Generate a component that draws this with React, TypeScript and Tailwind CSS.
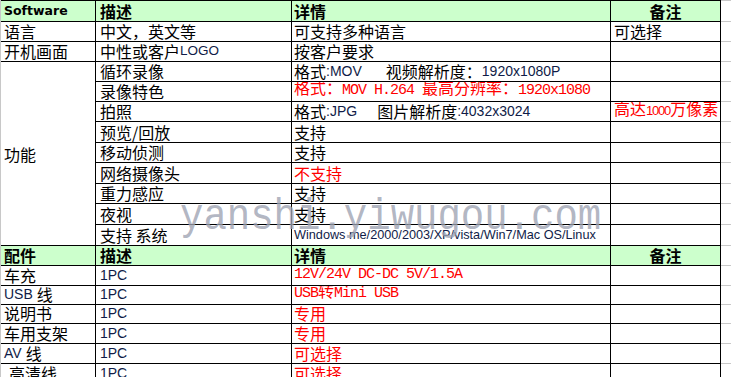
import type { ReactNode } from 'react'

// spreadsheet-style spec sheet
const cjk = "font-['Noto_Sans_CJK_SC',sans-serif]"

function L({ children, size = 'text-[14px]' }: { children: ReactNode; size?: string }) {
  return <span className={`font-['Liberation_Sans',sans-serif] ${size} text-[#101c48]`}>{children}</span>
}

function M({ children }: { children: ReactNode }) {
  return <span className="font-['Liberation_Mono',monospace] text-[15px] tracking-[-1px]">{children}</span>
}

function Cell({
  children,
  className = '',
  head = false,
  middle = false,
}: {
  children?: ReactNode
  className?: string
  head?: boolean
  middle?: boolean
}) {
  return (
    <div
      className={`flex overflow-hidden whitespace-nowrap border-r border-b border-black text-[16px] leading-[18px] text-black ${
        middle ? 'items-center' : 'items-end pb-px'
      } ${head ? 'bg-[#ccffcc] font-bold' : 'bg-white'} ${className}`}
    >
      {children}
    </div>
  )
}

function Gap({ top = false }: { top?: boolean }) {
  return <div className={`border-b border-[#c8c8c8] bg-white ${top ? 'border-t border-t-[#c8c8c8]' : ''}`} />
}

function Row({ a, b, c, d }: { a?: ReactNode; b: ReactNode; c: ReactNode; d?: ReactNode }) {
  return (
    <>
      {a !== undefined && <Cell className="pl-[3px]">{a}</Cell>}
      <Cell className="pl-[4px]">{b}</Cell>
      <Cell className="pl-[2px]">{c}</Cell>
      <Cell className="pl-[3px]">{d}</Cell>
      <Gap />
    </>
  )
}

const red = (t: ReactNode) => <span className="text-[#ff0000]">{t}</span>

export default function App() {
  return (
    <div className={`relative h-[377px] w-[731px] overflow-hidden bg-white ${cjk}`}>
      <div className="grid grid-cols-[95px_196px_319px_110px_1fr] grid-rows-[22px_20px_20px_20px_20px_20px_21px_20px_21px_20px_21px_21px_20px_20px_19px_19px_20px_20px_20px] border-l border-[#c8c8c8]">
        {/* software header */}
        <Cell head className="border-t pl-[3px]">
          <span className="font-['DejaVu_Sans',sans-serif] text-[12.5px]">Software</span>
        </Cell>
        <Cell head className="border-t pl-[4px]">描述</Cell>
        <Cell head className="border-t pl-[2px]">详情</Cell>
        <Cell head className="justify-center border-t">备注</Cell>
        <Gap top />

        <Row a="语言" b="中文，英文等" c="可支持多种语言" d="可选择" />
        <Row
          a="开机画面"
          b={
            <>
              中性或客户<L size="text-[13.5px]">LOGO</L>
            </>
          }
          c="按客户要求"
        />

        <Cell middle className="row-span-9 pl-[3px]">功能</Cell>
        <Row
          b="循环录像"
          c={
            <>
              格式 <L>:MOV</L>
              <span className="inline-block w-[24px]" />
              视频解析度：<L>1920x1080P</L>
            </>
          }
        />
        <Row
          b="录像特色"
          c={red(
            <>
              格式：<M>MOV H.264 </M>最高分辨率：<M>1920x1080</M>
            </>
          )}
        />
        <Row
          b="拍照"
          c={
            <>
              格式<L>:JPG</L>
              <span className="inline-block w-[20px]" />
              图片解析度<L>:4032x3024</L>
            </>
          }
          d={red(
            <>
              高达<span className="font-['Liberation_Sans',sans-serif] text-[13px] tracking-[-1.2px]">1000</span>万像素
            </>
          )}
        />
        <Row b="预览/回放" c="支持" />
        <Row b="移动侦测" c="支持" />
        <Row b="网络摄像头" c={red('不支持')} />
        <Row b="重力感应" c="支持" />
        <Row b="夜视" c="支持" />
        <Row b="支持 系统" c={<L size="text-[12.7px]">Windows me/2000/2003/XP/vista/Win7/Mac OS/Linux</L>} />

        {/* accessories header */}
        <Cell head className="pl-[3px]">配件</Cell>
        <Cell head className="pl-[4px]">描述</Cell>
        <Cell head className="pl-[2px]">详情</Cell>
        <Cell head className="justify-center">备注</Cell>
        <Gap />

        <Row a="车充" b={<L>1PC</L>} c={red(<M>12V/24V DC-DC 5V/1.5A</M>)} />
        <Row
          a={
            <>
              <L>USB</L>
              <span className="inline-block w-[4px]" />线
            </>
          }
          b={<L>1PC</L>}
          c={red(
            <>
              <M>USB</M>转<M>Mini USB</M>
            </>
          )}
        />
        <Row a="说明书" b={<L>1PC</L>} c={red('专用')} />
        <Row a="车用支架" b={<L>1PC</L>} c={red('专用')} />
        <Row
          a={
            <>
              <L>AV</L>
              <span className="inline-block w-[4px]" />线
            </>
          }
          b={<L>1PC</L>}
          c={red('可选择')}
        />
        <Row a={<span className="pl-[5px]">高清线</span>} b={<L>1PC</L>} c={red('可选择')} />
      </div>

      {/* watermark over the sheet */}
      <div className="pointer-events-none absolute left-[180px] top-[202px] origin-bottom scale-y-115 font-['Liberation_Mono',monospace] text-[39px] leading-[39px] text-[#9ea3b3]/80">
        yanshi.yiwugou.com
      </div>
    </div>
  )
}
